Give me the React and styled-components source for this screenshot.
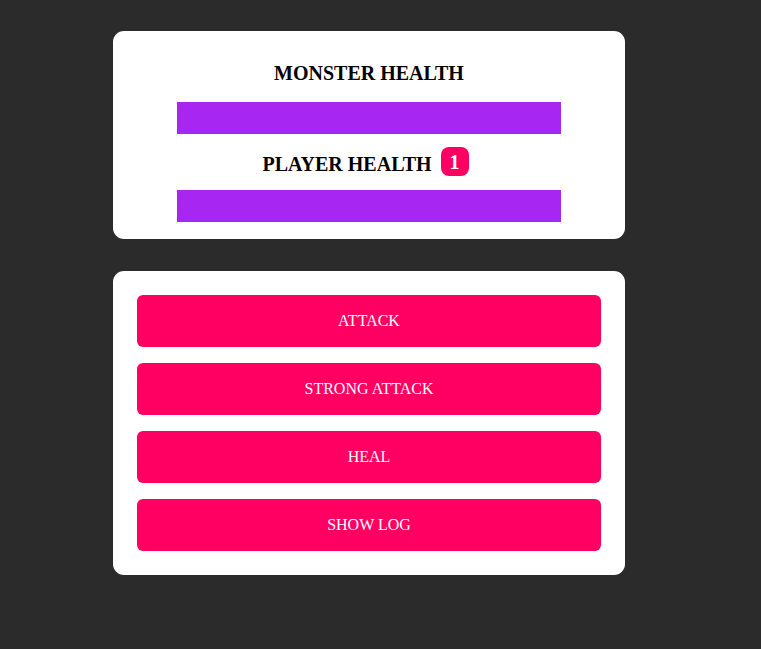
import React from 'react';
import styled, { createGlobalStyle } from 'styled-components';

const GlobalStyle = createGlobalStyle`
    html, body {
        margin: 0;
        padding: 0;
        background-color: #2b2b2b;
        font-family: "Liberation Serif", "Times New Roman", serif;
    }
`;

const Page = styled.main`
    display: flex;
    flex-direction: column;
    gap: 32px;
    width: 512px;
    padding: 31px 0 0 113px;
`;

const Card = styled.section`
    background-color: #fff;
    border-radius: 11px;
    box-sizing: border-box;
`;

const HealthCard = styled(Card)`
    display: flex;
    flex-direction: column;
    align-items: center;
    padding: 31px 0 17px;
`;

const Title = styled.h2`
    display: flex;
    align-items: flex-end;
    justify-content: center;
    gap: 9px;
    margin: 0;
    font-size: 20px;
    font-weight: bold;
    color: #000;
`;

const Badge = styled.span`
    display: inline-flex;
    align-items: center;
    justify-content: center;
    width: 28px;
    height: 29px;
    margin-right: 7px;
    border-radius: 8px;
    background-color: #ff0062;
    color: #fff;
    font-size: 20px;
    line-height: 1;
    font-weight: bold;
`;

const Bar = styled.div`
    width: 75%;
    height: 32px;
    margin: ${(p) => p.$top}px 0 ${(p) => p.$bottom}px;
    background-color: #a726f2;
`;

const Controls = styled(Card)`
    display: flex;
    flex-direction: column;
    gap: 16px;
    padding: 24px;
`;

const ActionButton = styled.button`
    height: 52px;
    border: none;
    border-radius: 6px;
    background-color: #ff0062;
    color: #fff;
    font-family: "Liberation Serif", "Times New Roman", serif;
    font-size: 16px;
    cursor: pointer;
`;

const actions = ['ATTACK', 'STRONG ATTACK', 'HEAL', 'SHOW LOG'];

export default function App() {
    return (
        <>
            <GlobalStyle />
            <Page>
                <HealthCard>
                    <Title>MONSTER HEALTH</Title>
                    <Bar $top={17} $bottom={13} />
                    <Title>
                        PLAYER HEALTH <Badge>1</Badge>
                    </Title>
                    <Bar $top={14} $bottom={0} />
                </HealthCard>

                <Controls>
                    {actions.map((a) => (
                        <ActionButton key={a}>{a}</ActionButton>
                    ))}
                </Controls>
            </Page>
        </>
    );
}
